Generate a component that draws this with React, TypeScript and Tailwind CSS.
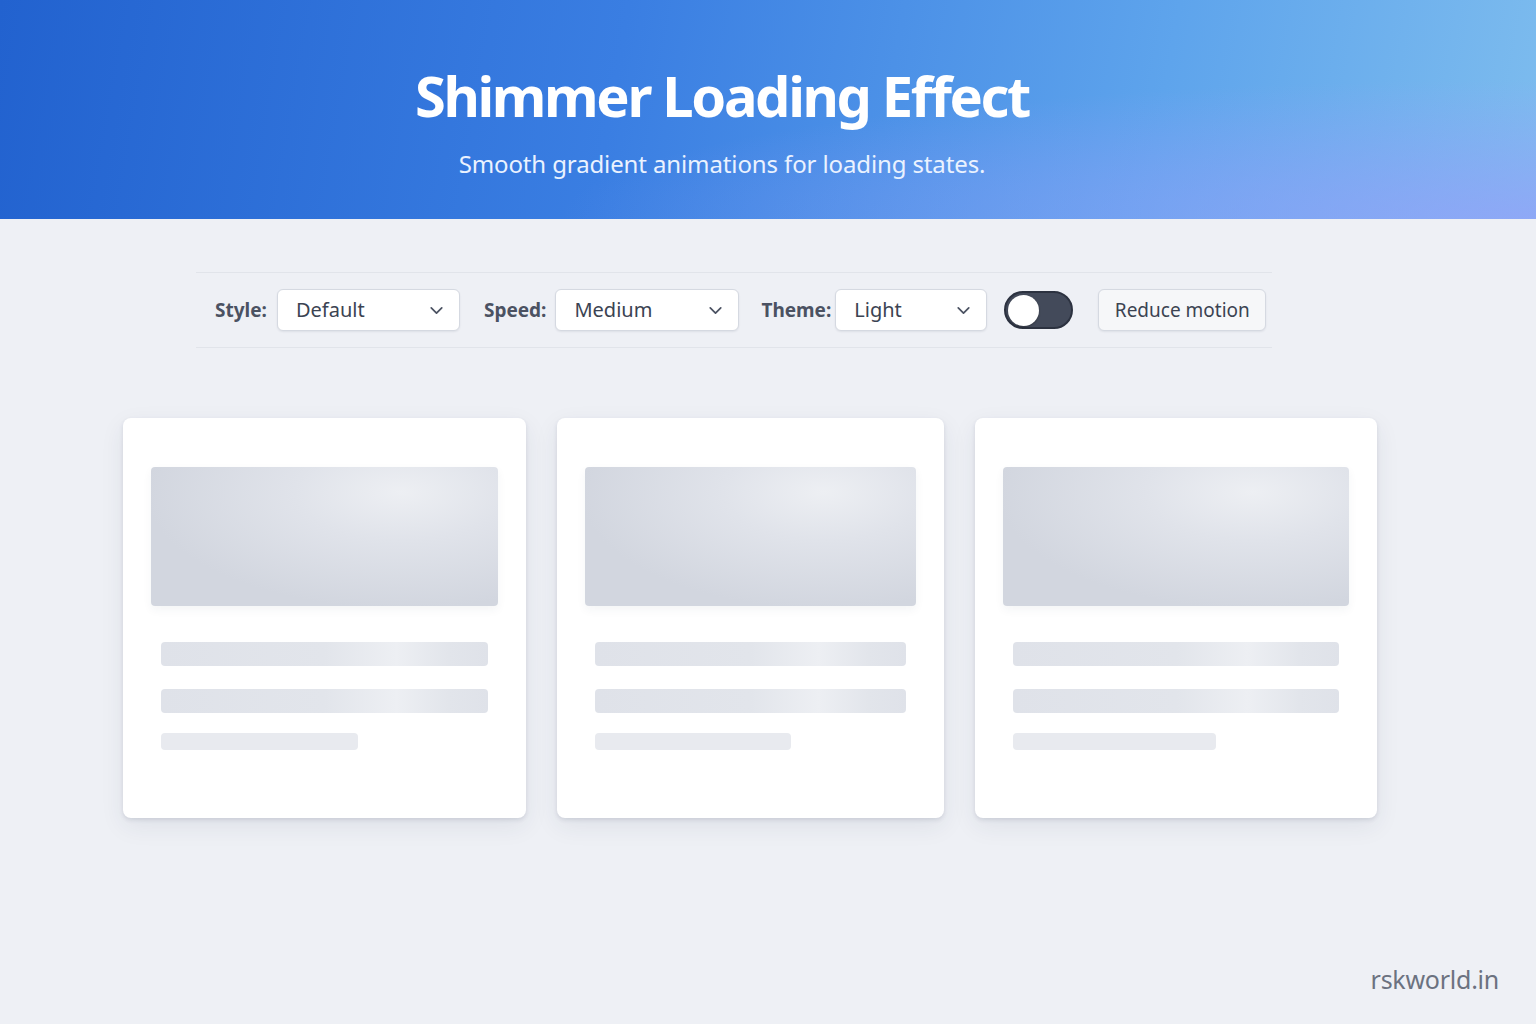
import React from 'react'
import { ChevronDown } from 'lucide-react'

const font = 'font-["Noto_Sans","Open_Sans",sans-serif]'

function Select({ value, width }: { value: string; width: string }) {
  return (
    <div
      className={`flex h-[42px] items-center justify-between rounded-md border border-[#d5d9e1] bg-white pl-[18px] pr-[12px] shadow-[0_1px_2px_rgba(30,40,70,0.08)] ${width}`}
    >
      <span className="text-[20px] text-[#3b4352]">{value}</span>
      <ChevronDown size={21} strokeWidth={2} className="text-[#4b5262]" />
    </div>
  )
}

function SkeletonCard({ width, lastLine }: { width: string; lastLine: string }) {
  return (
    <div
      className={`flex h-[400px] flex-col rounded-lg bg-white px-[28px] pt-[49px] shadow-[0_2px_4px_rgba(40,50,80,0.12),0_8px_24px_rgba(40,50,80,0.08)] ${width}`}
    >
      <div className="h-[139px] rounded-[4px] bg-[radial-gradient(ellipse_at_72%_18%,#edeff3_0%,#e0e3ea_30%,#d2d6df_72%)] shadow-[0_4px_10px_rgba(40,50,80,0.05)]" />
      <div className="mt-[36px] flex flex-col px-[10px]">
        <div className="h-[24px] rounded-[4px] bg-[linear-gradient(90deg,#dfe2e9_0%,#e2e5eb_50%,#edeff3_72%,#e2e5eb_88%,#dfe2e9_100%)]" />
        <div className="mt-[23px] h-[24px] rounded-[4px] bg-[linear-gradient(90deg,#dfe2e9_0%,#e2e5eb_50%,#edeff3_72%,#e2e5eb_88%,#dfe2e9_100%)]" />
        <div className={`mt-[20px] h-[17px] rounded-[4px] bg-[#e8eaef] ${lastLine}`} />
      </div>
    </div>
  )
}

export default function App() {
  return (
    <div className={`flex min-h-[1024px] w-full flex-col bg-[#eef0f5] ${font}`}>
      {/* header */}
      <header className="relative flex h-[219px] flex-col items-center overflow-hidden bg-[linear-gradient(100deg,#2262cf_0%,#3a7ee2_40%,#5ea4ec_75%,#7dbcee_100%)] pr-[92px]">
        <div className="absolute inset-0 bg-[radial-gradient(ellipse_at_100%_100%,rgba(150,160,250,0.7)_0%,rgba(150,160,250,0)_45%)]" />
        <h1 className="relative mt-[60px] text-[56px] font-bold leading-[70px] tracking-[-0.042em] text-white">
          Shimmer Loading Effect
        </h1>
        <p className="relative mt-[18px] text-[24px] leading-[32px] tracking-[-0.005em] text-[#eaf2ff]">
          Smooth gradient animations for loading states.
        </p>
      </header>

      {/* toolbar */}
      <div className="mx-auto mt-[53px] flex h-[76px] w-[1076px] -translate-x-[34px] items-center border-y border-[#e1e4ea] pl-[19px]">
        <span className="mr-[10px] text-[19px] font-bold text-[#4b5262]">Style:</span>
        <Select value="Default" width="w-[183px]" />
        <span className="ml-[24px] mr-[9px] text-[19px] font-bold text-[#4b5262]">Speed:</span>
        <Select value="Medium" width="w-[184px]" />
        <span className="ml-[22px] mr-[4px] text-[19px] font-bold text-[#4b5262]">Theme:</span>
        <Select value="Light" width="w-[152px]" />
        <button className="ml-[17px] flex h-[38px] w-[69px] items-center rounded-full border-2 border-[#2c3240] bg-[#434a5a] px-[2px]">
          <span className="h-[31px] w-[31px] rounded-full bg-white shadow-[0_1px_2px_rgba(0,0,0,0.3)]" />
        </button>
        <button className="ml-[25px] h-[42px] w-[168px] rounded-md border border-[#d5d9e1] bg-[#f6f7f9] text-[19px] text-[#3b4352] shadow-[0_1px_2px_rgba(30,40,70,0.08)]">
          Reduce motion
        </button>
      </div>

      {/* skeleton cards */}
      <div className="mt-[70px] flex gap-[31px] pl-[123px]">
        <SkeletonCard width="w-[403px]" lastLine="w-[197px]" />
        <SkeletonCard width="w-[387px]" lastLine="w-[196px]" />
        <SkeletonCard width="w-[402px]" lastLine="w-[203px]" />
      </div>

      <div className="mt-auto flex justify-end pb-[26px] pr-[37px]">
        <span className="text-[25px] tracking-[-0.01em] text-[#6b7280]">rskworld.in</span>
      </div>
    </div>
  )
}
